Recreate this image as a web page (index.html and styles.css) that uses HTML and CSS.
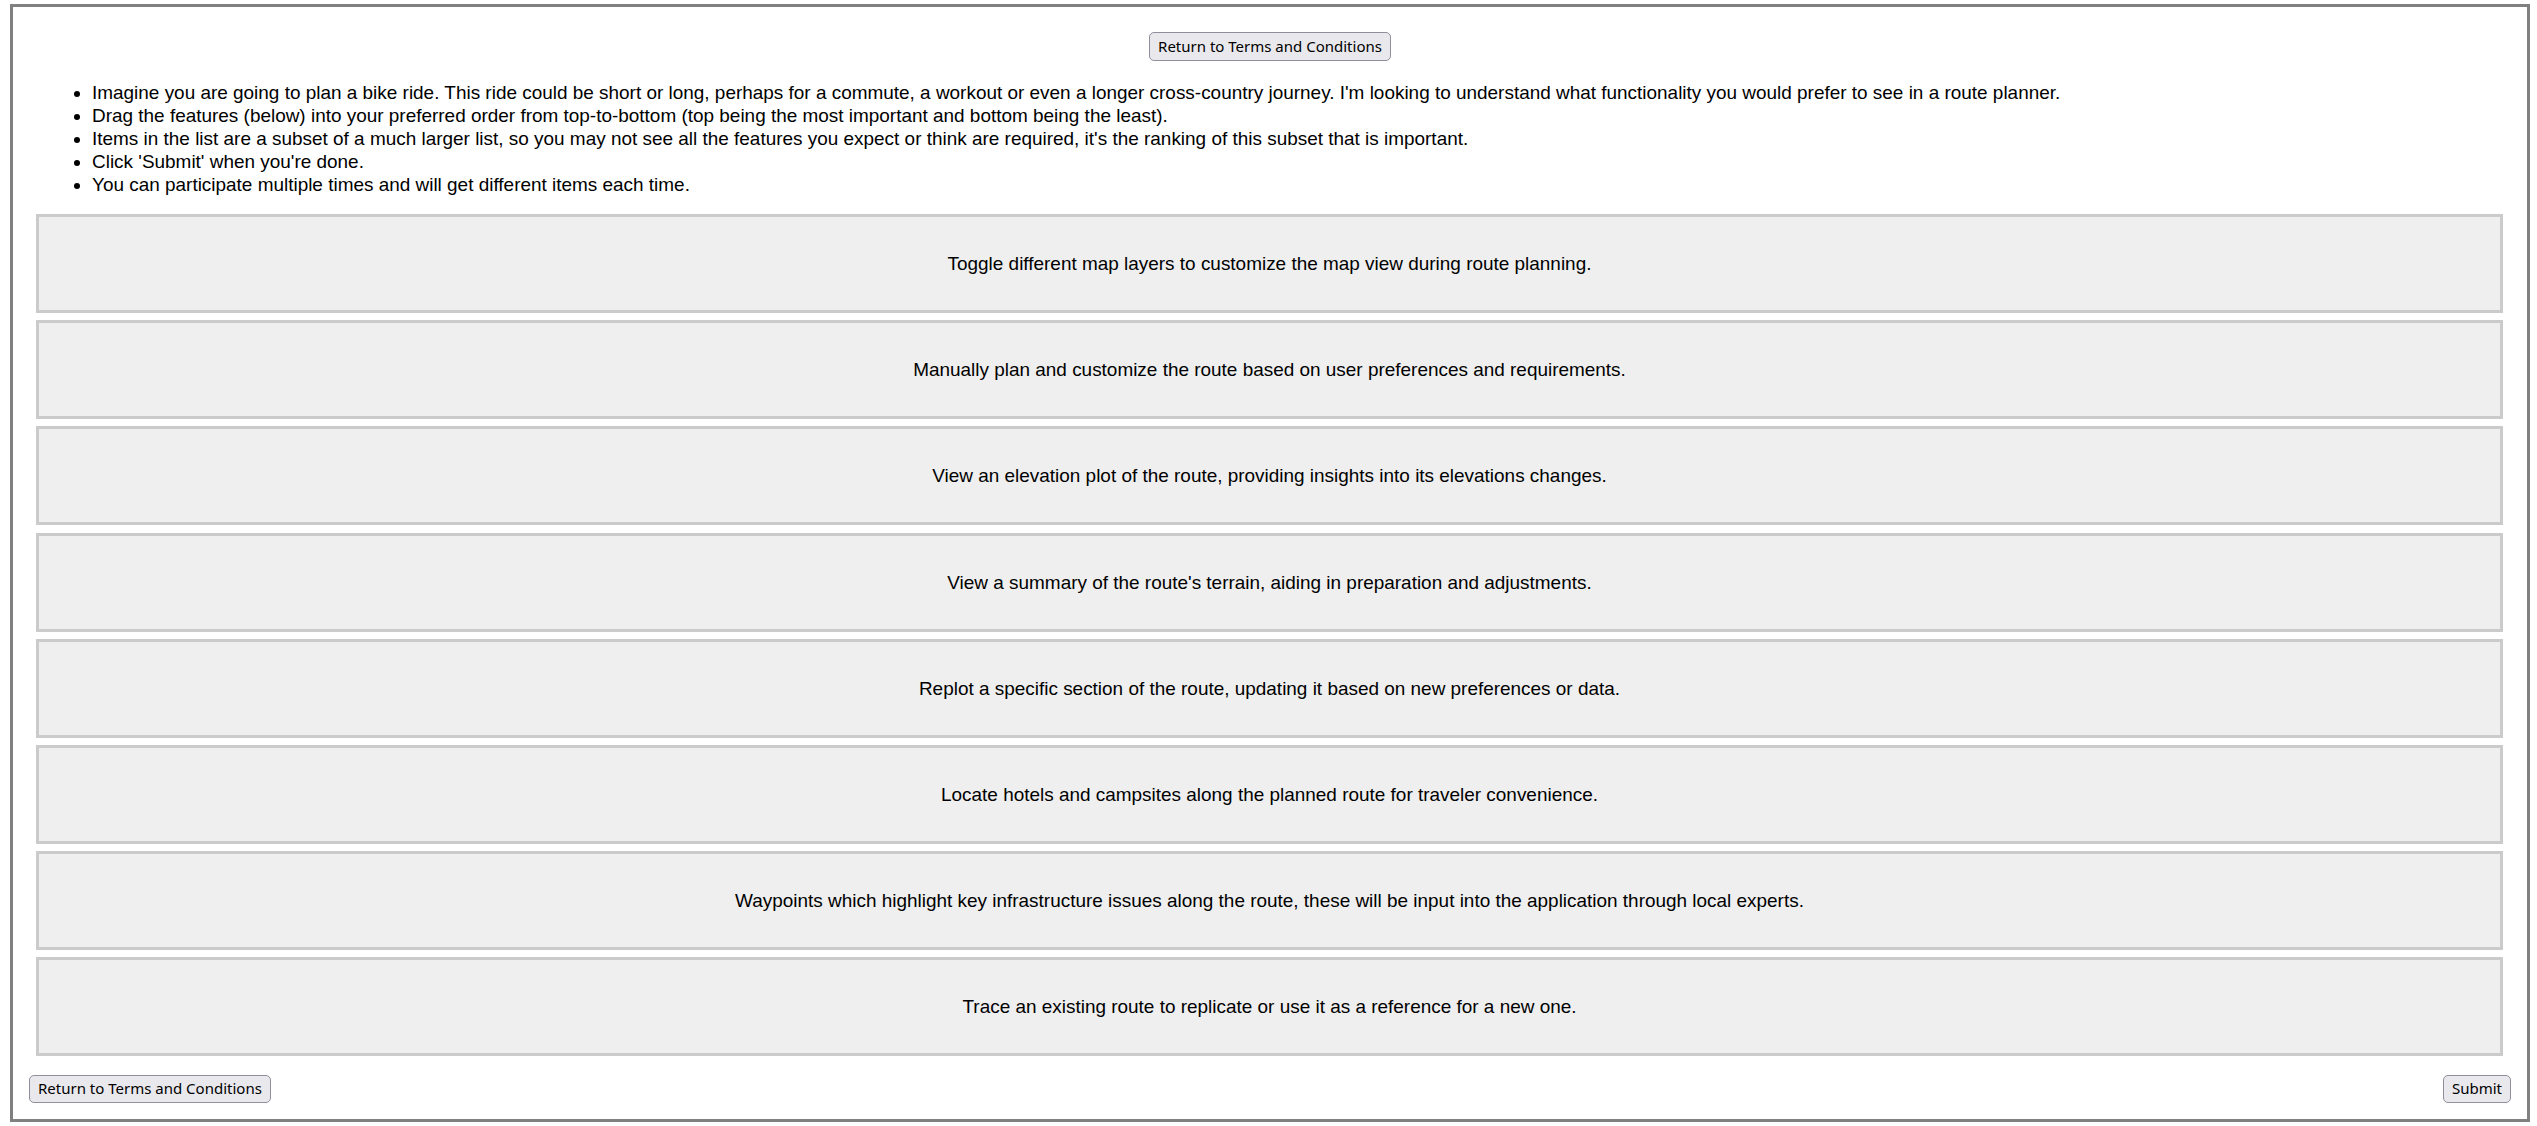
FILE: index.html
```html
<!DOCTYPE html>
<html lang="en">
<head>
<meta charset="utf-8">
<title>Feature ranking</title>
<link rel="stylesheet" href="styles.css">
</head>
<body>
<div class="panel">
  <div class="top-bar">
    <button class="btn" type="button">Return to Terms and Conditions</button>
  </div>
  <ul class="instructions">
    <li>Imagine you are going to plan a bike ride. This ride could be short or long, perhaps for a commute, a workout or even a longer cross-country journey. I'm looking to understand what functionality you would prefer to see in a route planner.</li>
    <li>Drag the features (below) into your preferred order from top-to-bottom (top being the most important and bottom being the least).</li>
    <li>Items in the list are a subset of a much larger list, so you may not see all the features you expect or think are required, it's the ranking of this subset that is important.</li>
    <li>Click 'Submit' when you're done.</li>
    <li>You can participate multiple times and will get different items each time.</li>
  </ul>
  <div class="features">
    <div class="feature">Toggle different map layers to customize the map view during route planning.</div>
    <div class="feature">Manually plan and customize the route based on user preferences and requirements.</div>
    <div class="feature">View an elevation plot of the route, providing insights into its elevations changes.</div>
    <div class="feature">View a summary of the route's terrain, aiding in preparation and adjustments.</div>
    <div class="feature">Replot a specific section of the route, updating it based on new preferences or data.</div>
    <div class="feature">Locate hotels and campsites along the planned route for traveler convenience.</div>
    <div class="feature">Waypoints which highlight key infrastructure issues along the route, these will be input into the application through local experts.</div>
    <div class="feature">Trace an existing route to replicate or use it as a reference for a new one.</div>
  </div>
  <div class="footer">
    <button class="btn" type="button">Return to Terms and Conditions</button>
    <button class="btn" type="button">Submit</button>
  </div>
</div>
</body>
</html>
```

FILE: styles.css
```css
html, body {
  margin: 0;
  padding: 0;
  background: #ffffff;
}

body {
  font-family: "Liberation Sans", Arial, sans-serif;
  color: #000000;
}

.panel {
  margin: 4px 7px 4px 10px;
  border: 3px solid #808080;
  padding: 25px 0 16px 0;
  display: flex;
  flex-direction: column;
}

.top-bar {
  display: flex;
  justify-content: center;
}

.btn {
  font-family: "Noto Sans", "Open Sans", sans-serif;
  font-size: 15px;
  line-height: 21px;
  color: #000000;
  background: #e9e9ed;
  border: 1px solid #8f8f9d;
  border-radius: 5px;
  padding: 3px 8px;
  margin: 0;
  cursor: pointer;
}

.instructions {
  margin: 19.5px 0 0 0;
  padding: 0 24px 0 79px;
  font-size: 18.95px;
  line-height: 23px;
}

.features {
  margin-top: 18.5px;
  padding: 0 24px 0 23px;
  display: flex;
  flex-direction: column;
  gap: 7.2px;
}

.feature {
  height: 99px;
  box-sizing: border-box;
  border: 3px solid #cbcbcb;
  background: #efefef;
  padding: 35px 10px;
  font-size: 18.95px;
  line-height: 23px;
  text-align: center;
  cursor: grab;
}

.footer {
  margin-top: 18.6px;
  padding: 0 16px;
  display: flex;
  justify-content: space-between;
  align-items: center;
}

.footer .btn {
  padding: 2.5px 8px;
}
```
